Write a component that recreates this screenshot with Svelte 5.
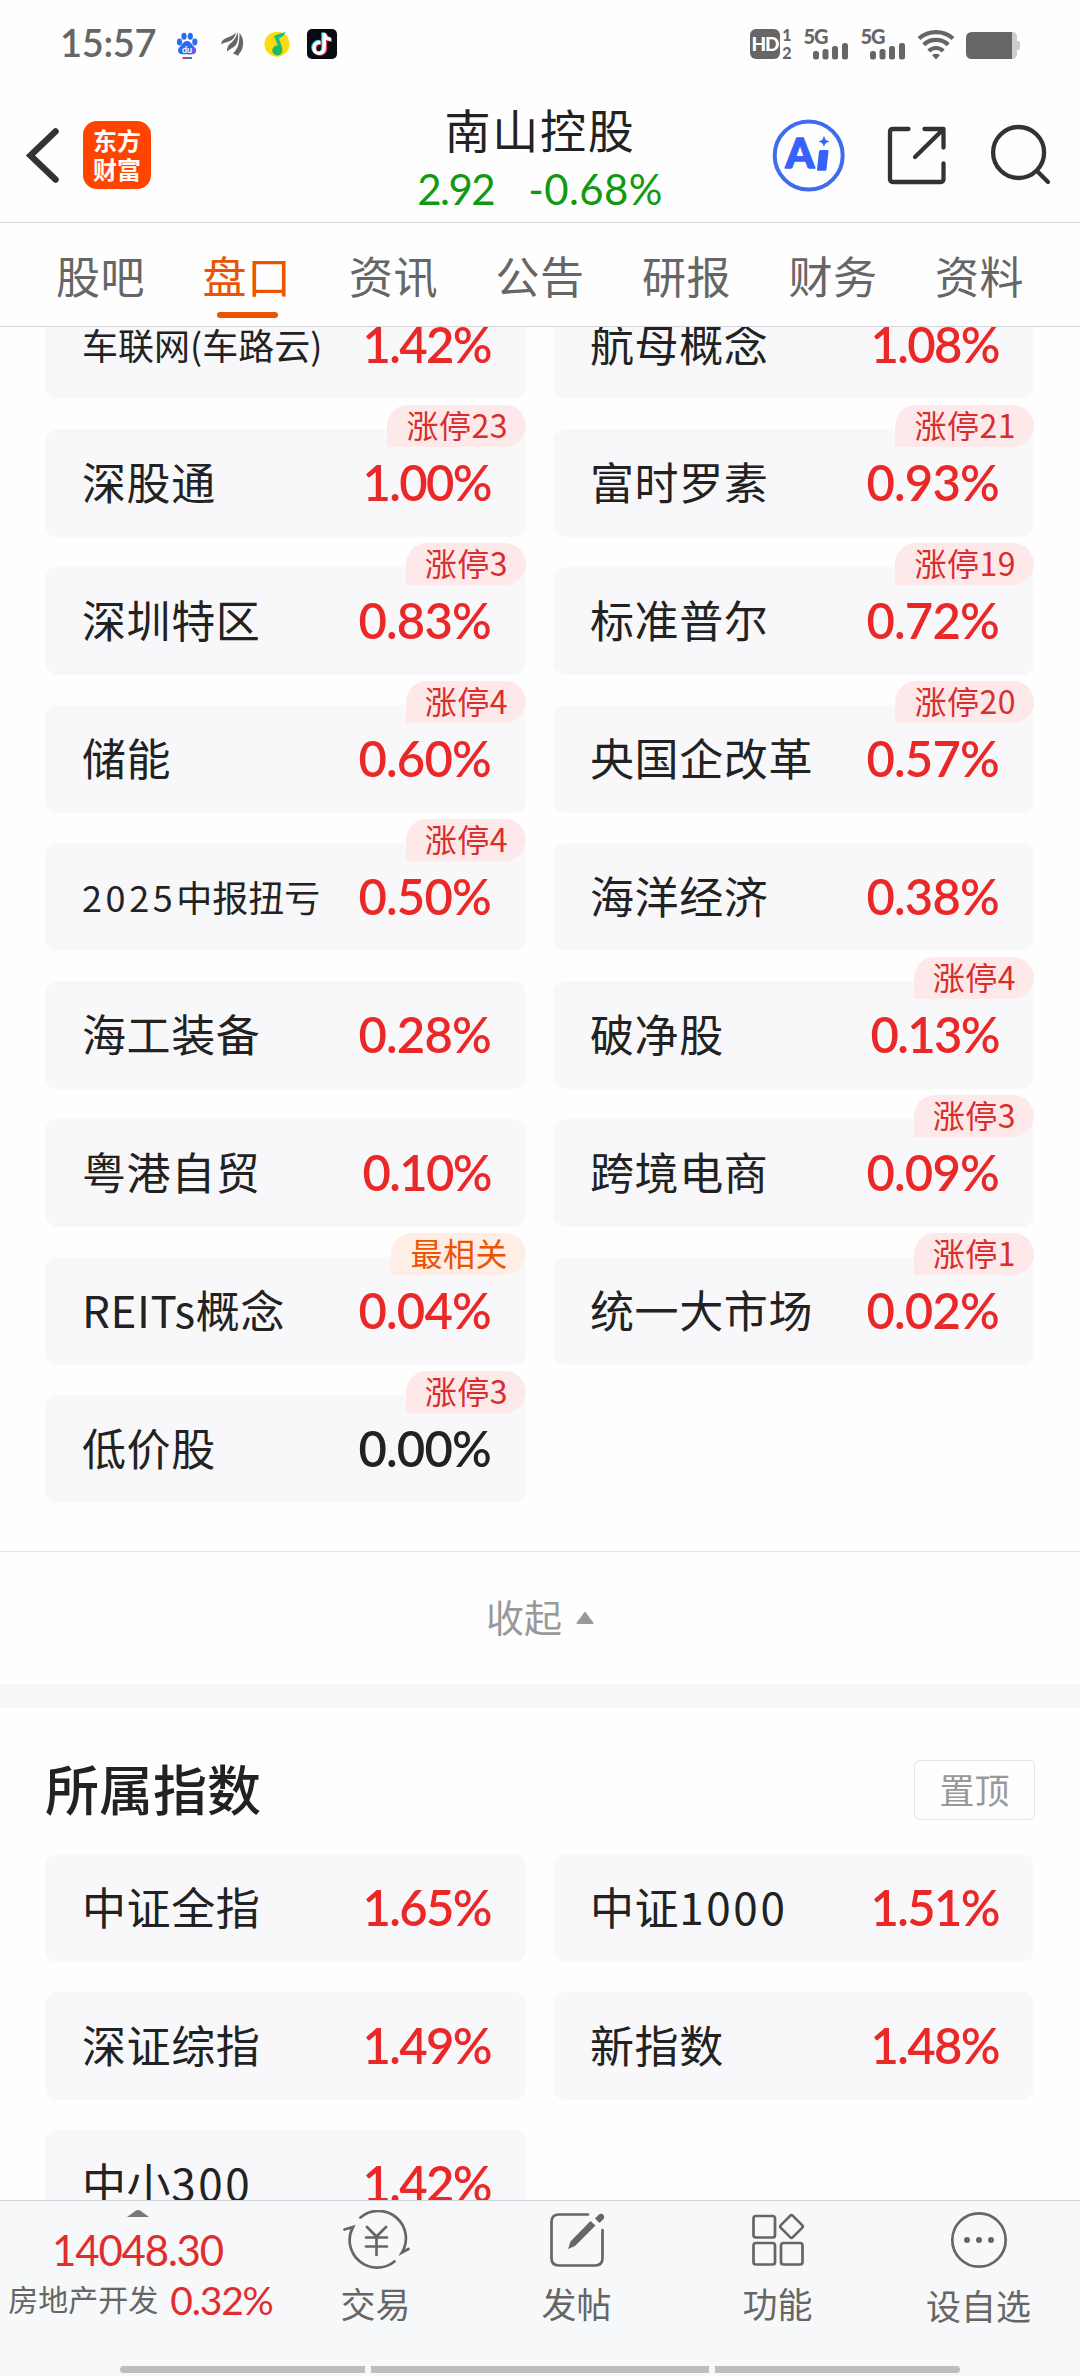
<script lang="ts">
	interface Board {
		name: string;
		change: string;
		tag?: string;
		hot?: boolean;
		small?: boolean;
	}

	const tabs = ['股吧', '盘口', '资讯', '公告', '研报', '财务', '资料'];
	let activeTab = $state('盘口');

	const concepts: Board[] = [
		{ name: '车联网(车路云)', change: '1.42%', small: true },
		{ name: '航母概念', change: '1.08%' },
		{ name: '深股通', change: '1.00%', tag: '涨停23' },
		{ name: '富时罗素', change: '0.93%', tag: '涨停21' },
		{ name: '深圳特区', change: '0.83%', tag: '涨停3' },
		{ name: '标准普尔', change: '0.72%', tag: '涨停19' },
		{ name: '储能', change: '0.60%', tag: '涨停4' },
		{ name: '央国企改革', change: '0.57%', tag: '涨停20' },
		{ name: '2025中报扭亏', change: '0.50%', tag: '涨停4', small: true },
		{ name: '海洋经济', change: '0.38%' },
		{ name: '海工装备', change: '0.28%' },
		{ name: '破净股', change: '0.13%', tag: '涨停4' },
		{ name: '粤港自贸', change: '0.10%' },
		{ name: '跨境电商', change: '0.09%', tag: '涨停3' },
		{ name: 'REITs概念', change: '0.04%', tag: '最相关', hot: true },
		{ name: '统一大市场', change: '0.02%', tag: '涨停1' },
		{ name: '低价股', change: '0.00%', tag: '涨停3' }
	];

	const indices: Board[] = [
		{ name: '中证全指', change: '1.65%' },
		{ name: '中证1000', change: '1.51%' },
		{ name: '深证综指', change: '1.49%' },
		{ name: '新指数', change: '1.48%' },
		{ name: '中小300', change: '1.42%' }
	];

	// digits inside a name get a looser tracking
	const runs = (name: string) => name.split(/(\d+)/).filter(Boolean);
</script>

{#snippet card(item: Board)}
	<div class="card">
		<span class="name" class:small={item.small}>
			{#each runs(item.name) as run}<span class:num={/^\d/.test(run)}>{run}</span>{/each}
		</span>
		<span class="change" class:flat={item.change === '0.00%'} class:tight={item.change.includes('1')}>{item.change}</span>
		{#if item.tag}
			<span class="tag" class:hot={item.hot}>{item.tag}</span>
		{/if}
	</div>
{/snippet}

<div class="page">
	<div class="status">
		<span class="time">15:57</span>
		<svg class="apps" width="166" height="36" viewBox="174 26 166 36" aria-hidden="true">
			<!-- baidu -->
			<g fill="#2a6cf0">
				<ellipse cx="179.5" cy="42" rx="2.6" ry="3.4" />
				<ellipse cx="184" cy="36.3" rx="2.6" ry="3.5" />
				<ellipse cx="190.3" cy="36.3" rx="2.6" ry="3.5" />
				<ellipse cx="194.8" cy="42" rx="2.6" ry="3.4" />
				<path d="M187 41c3 0 4.500 2.500 6 4.500 2 2 3.500 3.500 2.800 6-.8 3-4 2.700-8.800 2.700s-8 .3-8.800-2.700c-.7-2.500 1-4 2.800-6C182.500 43.500 184 41 187 41z" />
			</g>
			<path d="M188 54.200l5-8c2 2 3.500 3.200 2.800 5.800-.7 2.300-3 2.300-7.800 2.200z" fill="#6a55f0" />
			<text x="187" y="52.500" text-anchor="middle" class="du">du</text>
			<path d="M182.500 58h5" stroke="#d8433b" stroke-width="2" />
			<path d="M187 58h5" stroke="#3a76c8" stroke-width="2" />
			<!-- feather -->
			<g fill="#666">
				<path d="M221.500 44.500c-.5-3 2-5.500 5-6.500 4-1.500 7-3 9.500-5.500-1 4.500-3 7.500-7 9-3 1-5.500 1-7.500 3z" />
				<path d="M227 51.500c0-5 2-7 5-9.500 3-3 4.500-5.500 5.500-10 1 4.500 1 9.500-2 13.500-2 2.500-5.500 3-8.500 6z" />
				<path d="M238 56c-1.500-1.500-3.500-2-5-2.500 4-4 6.500-8 6.500-20.500 4.500 5 4.500 12.500 2 17.500-1.500 2.500-2.500 3-3.500 5.500z" />
			</g>
			<!-- music -->
			<circle cx="277" cy="44.200" r="12.500" fill="#fddc0b" />
			<path d="M273.500 36.500c3.500-2.500 7.500-3 12-4.500-1 3.500-3.500 5.500-6.500 6l3.500 11h-3.500l-4.500-12z" fill="#19bd83" />
			<circle cx="277.300" cy="50.500" r="5" fill="#19b76c" />
			<!-- tiktok -->
			<rect x="307" y="29" width="30" height="30" rx="5" fill="#090a12" />
			<g fill="none" stroke-width="3.400">
				<path d="M319.500 41.500c-9 0-8 12-1 11.500 3.500-.5 4.500-2.500 4.500-5.500V32.500c.5 4 3 6 7 6.200" stroke="#2ce6e6" />
				<path d="M321.500 43c-9 0-8 11.500-1 11 3.500-.5 5-2.500 5-5.500V34c.5 4 2.500 6 6.500 6.200" stroke="#f43659" />
				<path d="M320.500 42.300c-9 0-8 11.500-1 11 3.500-.5 4.700-2.500 4.700-5.500V33.200c.5 4 2.800 6 6.800 6.200" stroke="#fff" />
			</g>
		</svg>
		<svg class="signals" width="274" height="36" viewBox="748 26 274 36" fill="#666" aria-hidden="true">
			<rect x="750" y="29" width="30" height="30" rx="6" />
			<text x="765" y="51.300" text-anchor="middle" class="hd">HD</text>
			<text x="787" y="41" text-anchor="middle" class="sim">1</text>
			<text x="787" y="58.500" text-anchor="middle" class="sim">2</text>
			{#each [0, 57] as dx}
				<g transform="translate({dx} 0)">
					<text x="803.500" y="43.500" class="net">5G</text>
					<rect x="813" y="51" width="6" height="8.500" rx="2.500" />
					<rect x="822.500" y="49" width="6" height="10.500" rx="2.500" />
					<rect x="832" y="46" width="6" height="13.500" rx="2.500" />
					<rect x="842" y="43" width="6" height="16.500" rx="2.500" />
				</g>
			{/each}
			<g fill="none" stroke="#666" stroke-width="4.200">
				<path d="M919 38.500c9.500-8.500 24.500-8.500 34 0" />
				<path d="M923.800 44.800c6.500-6.500 18-6.500 24.400 0" />
				<path d="M928.800 51c4-4 10.400-4 14.400 0" />
			</g>
			<path d="M936 59.500l-4-4.500c2.500-1.800 5.500-1.800 8 0z" />
			<path d="M1008 32h4q5 0 5 5v4h1.500q1.500 0 1.500 2v5q0 2-1.500 2H1017v4q0 5-5 5h-4z" fill="#ccc" />
			<path d="M972 32h40v27h-40q-6 0-6-6V38q0-6 6-6z" />
		</svg>
	</div>

	<header class="header">
		<div class="left">
			<svg width="36" height="60" viewBox="24 125 36 60" aria-hidden="true">
				<path d="M55.500 131.500L30.500 155.500l25 24" fill="none" stroke="#333" stroke-width="6.500" stroke-linecap="round" />
			</svg>
			<div class="logo"><span>东方</span><span>财富</span></div>
		</div>
		<div class="stock">
			<h1>南山控股</h1>
			<div class="quote"><span>2.92</span><span class="diff">-0.68%</span></div>
		</div>
		<div class="actions">
			<svg width="282" height="80" viewBox="770 115 282 80" fill="none" stroke="#333" stroke-width="4.300" stroke-linecap="round" stroke-linejoin="round" aria-hidden="true">
				<circle cx="808.700" cy="155.500" r="34" stroke="#3f6bef" stroke-width="4" />
				<g fill="#3662fb" stroke="none">
					<text x="785.500" y="168" class="ai">A</text>
					<path d="M821 150h6.500q1.200 0 1 1.200l-2 18q-.2 1.500-1.500 1.500h-7q-1.200 0-1-1.200l2-18q.2-1.500 2-1.500z" />
					<path d="M824 135.500c1 4 2 5 5.500 6-3.500 1-4.500 2-5.500 5.500-1-3.500-2-4.500-5.500-5.500 3.500-1 4.500-2 5.500-6z" />
				</g>
				<path d="M908.500 129H893q-3 0-3 3v47q0 3 3 3h47.500q3 0 3-3v-15.500M924.500 129h19v18.500M941 131.500L915 157" />
				<circle cx="1018.600" cy="152.500" r="25.500" />
				<path d="M1037 171l11 11" />
			</svg>
		</div>
	</header>

	<nav class="tabs">
		{#each tabs as tab}
			<button class:active={tab === activeTab} onclick={() => (activeTab = tab)}>{tab}</button>
		{/each}
	</nav>

	<main class="scroll">
		<div class="grid concepts">
			{#each concepts as item}
				{@render card(item)}
			{/each}
		</div>

		<div class="fold">
			<span>收起</span>
			<svg width="18" height="12" viewBox="0 0 18 12" aria-hidden="true">
				<path d="M9 1L1.500 11h15z" fill="#999" stroke="#999" stroke-width="2" stroke-linejoin="round" />
			</svg>
		</div>

		<section class="indices">
			<div class="title">
				<h2>所属指数</h2>
				<button>置顶</button>
			</div>
			<div class="grid">
				{#each indices as item}
					{@render card(item)}
				{/each}
			</div>
		</section>
	</main>

	<footer class="bottom">
		<div class="bar">
			<div class="sector">
				<svg width="22" height="7" viewBox="0 0 22 7" aria-hidden="true"><path d="M0 7L9 .5q2-1 4 0L22 7z" fill="#777" /></svg>
				<span class="point">14048.30</span>
				<div class="line"><span class="label">房地产开发</span><span class="pct">0.32%</span></div>
			</div>
			<div class="item">
				<svg width="70" height="60" viewBox="340 2210 70 60" aria-hidden="true">
					<path d="M359.500 2217.500A27.500 27.500 0 0 1 401 2252.500l6.500-3.500M393.500 2261.500A27.500 27.500 0 0 1 352 2227l-8.500 2.500M366 2227l9.500 9.500 9.500-9.500M365 2237.500h21M365 2246.500h21M375.500 2237v18" />
				</svg>
				<span>交易</span>
			</div>
			<div class="item">
				<svg width="70" height="60" viewBox="542 2210 70 60" aria-hidden="true">
					<path d="M588 2214.500h-29q-7.500 0-7.500 7.500v36q0 7.500 7.500 7.500h36q7.500 0 7.500-7.500v-28" />
					<path class="solid" d="M568 2249l2.500-7.500 20-20.500 5 4.500-20.500 20.500zM595 2218.500l4-4c2.500-2.500 7 1 4.500 4.500l-4 4z" />
				</svg>
				<span>发帖</span>
			</div>
			<div class="item">
				<svg width="70" height="60" viewBox="743 2210 70 60" aria-hidden="true">
					<rect x="753.500" y="2216" width="21.500" height="21.500" rx="2.500" />
					<rect x="753.500" y="2243" width="21.500" height="21.500" rx="2.500" />
					<rect x="781" y="2243" width="21.500" height="21.500" rx="2.500" />
					<rect x="783" y="2218" width="17" height="17" rx="2" transform="rotate(45 791.500 2226.500)" />
				</svg>
				<span>功能</span>
			</div>
			<div class="item more">
				<svg width="70" height="60" viewBox="944 2210 70 60" aria-hidden="true">
					<circle cx="979" cy="2240" r="26.700" />
					<g class="solid"><circle cx="967" cy="2240" r="3" /><circle cx="979" cy="2240" r="3" /><circle cx="991" cy="2240" r="3" /></g>
				</svg>
				<span>设自选</span>
			</div>
		</div>
		<div class="home"><i></i><i></i><i></i></div>
	</footer>
</div>

<style>
	:global(body) {
		margin: 0;
		background: #fefefe;
	}

	.page {
		display: flex;
		flex-direction: column;
		width: 1080px;
		height: 2376px;
		overflow: hidden;
		background: #fefefe;
		color: #222;
		font-family: 'Noto Sans CJK SC', 'Noto Sans', sans-serif;
	}

	button {
		border: 0;
		padding: 0;
		background: none;
		font-family: inherit;
	}

	.status {
		display: flex;
		align-items: center;
		height: 88px;
		padding: 0 58px 0 60px;
		box-sizing: border-box;
	}

	.time {
		width: 114px;
		font: 600 38px/44px Lato, sans-serif;
		letter-spacing: -0.3px;
		margin-top: -5px;
		color: #666;
	}

	.signals {
		margin-left: auto;
	}

	.du {
		font: bold 9px Lato, sans-serif;
		fill: #fff;
	}

	.hd {
		font: 900 19px Lato, sans-serif;
		fill: #fff;
		letter-spacing: -1px;
	}

	.sim {
		font: 900 16px Lato, sans-serif;
	}

	.net {
		font: 900 20px Lato, sans-serif;
		letter-spacing: -1px;
	}

	.header {
		display: grid;
		grid-template-columns: 310px 1fr 310px;
		height: 134px;
		border-bottom: 1px solid #d5d5d7;
	}

	.left {
		display: flex;
		align-items: center;
		gap: 23px;
		padding-left: 24px;
	}

	.logo {
		display: flex;
		flex-direction: column;
		align-items: center;
		justify-content: center;
		width: 68px;
		height: 68px;
		padding-bottom: 3px;
		box-sizing: border-box;
		border-radius: 14px;
		background: #ff4400;
		color: #fff;
		font-size: 24px;
		font-weight: 700;
		line-height: 29px;
	}

	.stock {
		display: flex;
		flex-direction: column;
		align-items: center;
	}

	h1 {
		margin: 11px 0 3px;
		font-size: 46px;
		line-height: 58px;
		font-weight: 400;
		letter-spacing: 1.800px;
	}

	.quote {
		display: flex;
		gap: 34px;
		color: #119a11;
		font: 400 42px/58px Lato, sans-serif;
		letter-spacing: -1.500px;
	}

	.diff {
		letter-spacing: 0.4px;
	}

	.actions {
		display: flex;
		align-items: center;
		justify-content: flex-end;
		padding-right: 28px;
	}

	.ai {
		font: 900 41px Lato, sans-serif;
		stroke: #3662fb;
		stroke-width: 1.500px;
	}

	.tabs {
		display: flex;
		justify-content: space-between;
		height: 103px;
		padding: 0 56px;
		border-bottom: 1px solid #d5d5d7;
	}

	.tabs button {
		display: flex;
		flex-direction: column;
		align-items: center;
		padding-top: 22px;
		color: #666;
		font-size: 44px;
		line-height: 60px;
		letter-spacing: 0.5px;
	}

	.tabs .active {
		color: #ea5504;
	}

	.tabs .active::after {
		content: '';
		width: 61px;
		height: 6px;
		margin-top: 7px;
		border-radius: 3px;
		background: #ea5504;
	}

	.scroll {
		flex: 1;
		min-height: 0;
		overflow: hidden;
	}

	.grid {
		display: grid;
		grid-template-columns: 481px 481px;
		grid-auto-rows: 108px;
		gap: 30px 27px;
		padding: 0 45px;
	}

	/* list is scrolled part of a row under the tabs */
	.concepts {
		margin-top: -36px;
		padding-bottom: 48px;
	}

	.card {
		position: relative;
		display: flex;
		align-items: center;
		justify-content: space-between;
		padding: 0 35px 0 37px;
		border-radius: 12px;
		background: #f8f8fa;
	}

	.name {
		padding-bottom: 4px;
		font-size: 44px;
		line-height: 60px;
		letter-spacing: 0.6px;
		white-space: nowrap;
	}

	.name.small {
		padding-bottom: 2px;
		font-size: 36px;
		letter-spacing: 0;
	}

	.name .num {
		letter-spacing: 0.06em;
	}

	.small .num {
		letter-spacing: 0.1em;
	}

	.change {
		color: #eb2828;
		font: 600 49px/60px Lato, sans-serif;
		letter-spacing: -0.8px;
		padding-bottom: 3px;
	}

	.change.tight {
		letter-spacing: -1.600px;
	}

	.change.flat {
		color: #222;
	}

	.tag {
		position: absolute;
		top: -24px;
		right: 0;
		height: 42px;
		padding: 0 18px 0 19px;
		border-radius: 21px 21px 21px 0;
		background: #fde9e9;
		color: #d82e2e;
		font-size: 32px;
		line-height: 38px;
		letter-spacing: 0.5px;
	}

	.tag.hot {
		background: #feeee5;
		color: #ea5504;
	}

	.fold {
		display: flex;
		align-items: center;
		justify-content: center;
		gap: 14px;
		height: 132px;
		border-top: 1px solid #e3e3e3;
		color: #999;
		font-size: 38px;
	}

	.fold span {
		padding-bottom: 6px;
	}

	.indices {
		border-top: 24px solid #f8f8fa;
	}

	.title {
		display: flex;
		align-items: center;
		justify-content: space-between;
		height: 60px;
		padding: 52px 45px 34px;
	}

	h2 {
		margin: 0;
		padding-bottom: 5px;
		font-size: 54px;
		font-weight: 500;
		line-height: 60px;
	}

	.title button {
		width: 121px;
		height: 60px;
		border: 1px solid #e3e3e3;
		border-radius: 6px;
		color: #999;
		font-size: 35px;
		line-height: 54px;
		padding-bottom: 3px;
	}

	.bottom {
		height: 175px;
		border-top: 1px solid #d3d7db;
		background: #f7f8fa;
	}

	.bar {
		display: grid;
		grid-template-columns: 275px repeat(4, 201px);
		height: 165px;
	}

	.sector {
		display: flex;
		flex-direction: column;
		align-items: center;
		padding-top: 9px;
	}

	.point {
		margin-top: 7px;
		color: #e02e2e;
		font: 400 42px/52px Lato, sans-serif;
		letter-spacing: -1.200px;
	}

	.line {
		display: flex;
		align-items: center;
		gap: 12px;
		padding-left: 6px;
		white-space: nowrap;
	}

	.label {
		padding-bottom: 3px;
		color: #666;
		font-size: 30px;
		line-height: 45px;
	}

	.pct {
		color: #e02e2e;
		font: 400 39px/48px Lato, sans-serif;
		letter-spacing: -1.200px;
	}

	.item {
		display: flex;
		flex-direction: column;
		align-items: center;
		padding-top: 9px;
		color: #666;
		font-size: 35px;
		line-height: 50px;
	}

	.item svg {
		margin-bottom: 8px;
		fill: none;
		stroke: #666;
		stroke-width: 2.700;
		stroke-linecap: round;
	}

	.item .solid {
		fill: #666;
		stroke: none;
	}

	.item.more svg {
		margin-bottom: 10px;
	}

	.home {
		display: flex;
		justify-content: center;
		gap: 6px;
	}

	.home i {
		width: 245px;
		height: 7px;
		background: #bcbdbf;
	}

	.home i:nth-child(2) {
		width: 338px;
	}

	.home i:first-child {
		border-radius: 4px 0 0 4px;
	}

	.home i:last-child {
		border-radius: 0 4px 4px 0;
	}
</style>
